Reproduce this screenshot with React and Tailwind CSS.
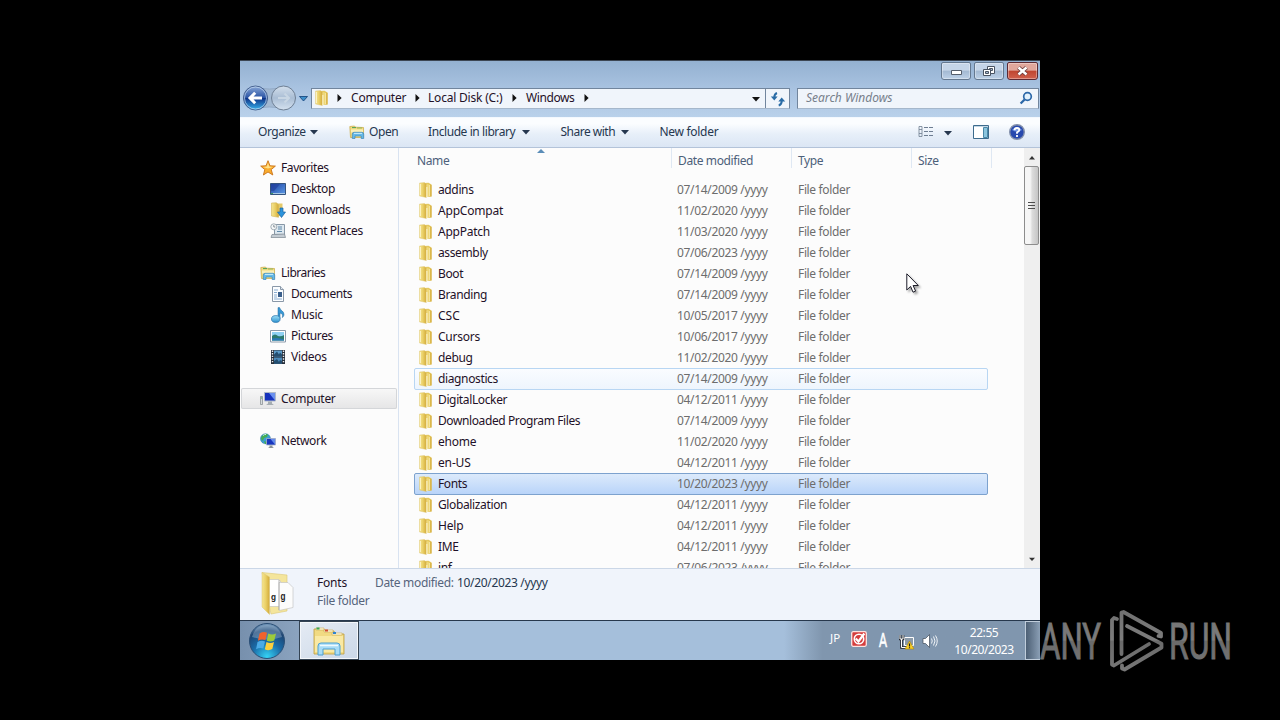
import clsx from 'clsx';

const folders = [
  ['addins', '07/14/2009'],
  ['AppCompat', '11/02/2020', 'tracking-[-0.2px]'],
  ['AppPatch', '11/03/2020', 'tracking-[-0.25px]'],
  ['assembly', '07/06/2023'],
  ['Boot', '07/14/2009'],
  ['Branding', '07/14/2009'],
  ['CSC', '10/05/2017', 'tracking-normal'],
  ['Cursors', '10/06/2017', 'tracking-[-0.25px]'],
  ['debug', '11/02/2020'],
  ['diagnostics', '07/14/2009'],
  ['DigitalLocker', '04/12/2011'],
  ['Downloaded Program Files', '07/14/2009', 'tracking-[-0.4px]'],
  ['ehome', '11/02/2020', 'tracking-[-0.2px]'],
  ['en-US', '04/12/2011', 'tracking-[-0.15px]'],
  ['Fonts', '10/20/2023'],
  ['Globalization', '04/12/2011'],
  ['Help', '04/12/2011', 'tracking-[-0.2px]'],
  ['IME', '04/12/2011', 'tracking-[-0.3px]'],
  ['inf', '07/06/2023'],
];

function Gradients() {
  return (
    <svg className="absolute w-0 h-0" aria-hidden="true">
      <defs>
        <linearGradient id="folder" x1="0" x2="1">
          <stop offset="0" stopColor="#f5e491" />
          <stop offset=".5" stopColor="#ead067" />
          <stop offset="1" stopColor="#d3aa3a" />
        </linearGradient>
        <linearGradient id="screen" x1="0" x2="1" y2="1">
          <stop offset="0" stopColor="#1b3f9e" />
          <stop offset="1" stopColor="#5f9de8" />
        </linearGradient>
        <linearGradient id="cyan" x2="0" y2="1">
          <stop offset="0" stopColor="#9fe0f8" />
          <stop offset="1" stopColor="#2f93cf" />
        </linearGradient>
        <linearGradient id="back" x2="0" y2="1">
          <stop offset="0" stopColor="#8ba9d8" />
          <stop offset=".48" stopColor="#2c55a5" />
          <stop offset=".52" stopColor="#0f3488" />
          <stop offset="1" stopColor="#39b4ee" />
        </linearGradient>
        <linearGradient id="forward" x2="0" y2="1">
          <stop offset="0" stopColor="#d3dfec" />
          <stop offset=".5" stopColor="#a9bdd4" />
          <stop offset="1" stopColor="#d5e2f0" />
        </linearGradient>
        <radialGradient id="orb" cx=".5" cy=".95" r=".95">
          <stop offset="0" stopColor="#35d3f5" />
          <stop offset=".45" stopColor="#1a6ca8" />
          <stop offset=".8" stopColor="#1d4472" />
          <stop offset="1" stopColor="#7ea2c4" />
        </radialGradient>
      </defs>
    </svg>
  );
}

function FolderIcon() {
  return (
    <svg viewBox="0 0 16 16" className="w-4 h-4 shrink-0">
      <path d="M6 1 10.500.8 13.500 2.500v12L7 14.500z" fill="#e4c860" />
      <path d="M8 2.500 10.500 2l3 1v11.500l-5 .3z" fill="url(#folder)" />
      <path d="M1.500 1 6.500.6 8.300 2.500v13L1.500 14z" fill="url(#folder)" stroke="#dcc26c" strokeWidth=".4" />
      <path d="M8.900 5v10" stroke="#fffbe0" strokeWidth=".9" />
      <path d="M2.500 2v11" stroke="#fbf2c3" strokeWidth="1" />
      <path d="M11.300 3v11" stroke="#f8ecb0" strokeWidth="1" />
    </svg>
  );
}

function LibraryIcon() {
  return (
    <svg viewBox="0 0 16 16" className="w-4 h-4 shrink-0">
      <path d="M.8 2.500 5.500 2l1 1.200 8 .3v10H1.500z" fill="#f2dc82" stroke="#c9a945" strokeWidth=".7" />
      <path d="M3 3.600h4" stroke="#48a05a" strokeWidth="1" />
      <path d="M8 4h5" stroke="#7dae54" strokeWidth=".8" />
      <path d="M2 5.500h12v3H2z" fill="#faefb8" />
      <path d="M3.300 14.500V10q0-1.700 1.700-1.700h8q1.700 0 1.700 1.700v4.500h-2.500V12H6v2.500z" fill="#65b9e8" stroke="#3e86bb" strokeWidth=".7" />
      <path d="M5 9.400h8" stroke="#c9edfb" />
    </svg>
  );
}

function StarIcon() {
  return (
    <svg viewBox="0 0 16 16" className="w-4 h-4 shrink-0">
      <path d="m8 .7 2 5.100 5.400.3-4.200 3.500 1.600 5.400L8 12l-4.600 3L4.800 9.600.7 6.100 6 5.800z" fill="#f9ac2e" stroke="#c8731a" strokeWidth=".9" />
      <path d="m8 2.800 1.200 3.800 3.800.3L8 8.500 3 6.900l3.800-.3z" fill="#ffe28a" />
    </svg>
  );
}

function DesktopIcon() {
  return (
    <svg viewBox="0 0 16 16" className="w-4 h-4 shrink-0">
      <path d="M.5 2.500h15v11H.5z" fill="url(#screen)" stroke="#35547f" />
      <path d="M1 3h9L4 10H1z" fill="#2343a0" opacity=".7" />
      <path d="M1 12.500h14" stroke="#a9c8e6" />
      <path d="M1 12.500h2" stroke="#3e9d62" />
    </svg>
  );
}

function DownloadsIcon() {
  return (
    <svg viewBox="0 0 16 16" className="w-4 h-4 shrink-0">
      <path d="M6 1.500h6.500v12L7 14.500z" fill="#e5ca6a" />
      <path d="M1.500 1 6.500.8 8.500 3v12.300L1.500 14z" fill="url(#folder)" stroke="#d2b557" strokeWidth=".6" />
      <path d="M10 6h3v4h2.500L11.500 15.500 7.500 10H10z" fill="#2c94dc" stroke="#1d649f" strokeWidth=".7" />
    </svg>
  );
}

function RecentIcon() {
  return (
    <svg viewBox="0 0 16 16" className="w-4 h-4 shrink-0">
      <path d="M4.500 1.500h10v10h-10z" fill="#dde8f0" stroke="#8797a6" />
      <path d="M8 4h4M8 6h4M7 8.500h5" stroke="#6089a8" />
      <path d="m2 11.500 12.500-.5 1 3.500H1z" fill="#c4ccd3" stroke="#7b8790" strokeWidth=".7" />
      <circle cx="3.800" cy="3.800" r="3" fill="#f5f7f8" stroke="#9aa6ae" strokeWidth=".9" />
      <path d="M3.800 2v2h1.500" stroke="#56656f" strokeWidth=".7" fill="none" />
    </svg>
  );
}

function DocumentIcon() {
  return (
    <svg viewBox="0 0 16 16" className="w-4 h-4 shrink-0">
      <path d="M2.500.5h8l3 3v12h-11z" fill="#fbfdff" stroke="#8a98a8" />
      <path d="M10.500.5v3h3" fill="#dfe7ef" stroke="#8a98a8" />
      <path d="M4 4h4M4 6.500h3M4 9h3M4 11h3M4 13h8" stroke="#7ea4cc" strokeWidth=".9" />
      <path d="M8 6h4v5H8z" fill="#3a5f8c" />
    </svg>
  );
}

function MusicIcon() {
  return (
    <svg viewBox="0 0 16 16" className="w-4 h-4 shrink-0">
      <path d="M8 12V.6h1.600c.6 2.800 4.200 3.400 4.400 6.600.1 1.500-.8 2.700-1.700 3.400.7-2.600.2-3.900-2.300-4.600V12z" fill="#3797d4" stroke="#226a9f" strokeWidth=".5" />
      <ellipse cx="5.800" cy="12" rx="4.300" ry="3.400" fill="url(#cyan)" stroke="#226fa9" strokeWidth=".7" />
    </svg>
  );
}

function PictureIcon() {
  return (
    <svg viewBox="0 0 16 16" className="w-4 h-4 shrink-0">
      <path d="M.5 2.500h15v11.500H.5z" fill="#fff" stroke="#8d9baa" />
      <path d="M2 4h12v8.500H2z" fill="#8fd0f2" />
      <path d="M2 8q3-3 6 0 3 1 6-1v5.500H2z" fill="#2c7a6e" />
      <path d="M2 10.500q6-1.500 12 1v1H2z" fill="#2b78b5" />
    </svg>
  );
}

function VideoIcon() {
  return (
    <svg viewBox="0 0 16 16" className="w-4 h-4 shrink-0">
      <path d="M1 1h14v14H1z" fill="#272f3a" />
      <path d="M4 1.500h8v6H4z" fill="#5d9cc9" />
      <path d="M4 8.500h8v6H4z" fill="#4b8abb" />
      <path d="m4 5.500 3-3 2 3 1-2 2 2v2H4zM4 12l3-2 2 3 1-2 2 1v2.500H4z" fill="#244e70" />
      <path d="M2.500 1.500v13M13.500 1.500v13" stroke="#e9edf1" strokeWidth="1.400" strokeDasharray="1.400 1.200" />
    </svg>
  );
}

function ComputerIcon() {
  return (
    <svg viewBox="0 0 16 16" className="w-4 h-4 shrink-0">
      <path d="M.5 5.500h2v8h-2z" fill="#d7dbdd" stroke="#83898c" strokeWidth=".7" />
      <path d="M1 7h1" stroke="#4aaf4a" />
      <path d="M4.500 1.500h11V10h-11z" fill="#1632bc" stroke="#aeb8c8" />
      <path d="m9 2 6 0v7.500z" fill="#6a90ef" />
      <path d="M8 10.500h4v2l2 1.500H6l2-1.500z" fill="#a6adb2" />
    </svg>
  );
}

function NetworkIcon() {
  return (
    <svg viewBox="0 0 16 16" className="w-4 h-4 shrink-0">
      <circle cx="5.500" cy="5.800" r="5" fill="#3a9fd2" stroke="#276f9b" strokeWidth=".5" />
      <path d="M1.500 3.500Q5 0 8 1.500L7 4 4 5 3 8 1 6zM4 8l3 1v2H5z" fill="#45ad54" />
      <path d="M3 2.500q2-1.500 3-1" stroke="#c5f3df" />
      <path d="M6.500 5.500h9V12h-9z" fill="#1735be" stroke="#a7b3c9" strokeWidth=".8" />
      <path d="m10.500 6 4.500 0v5.500z" fill="#638bec" />
      <path d="M9.500 12.400h3V14l1.500 1H8l1.500-1z" fill="#8c9499" />
    </svg>
  );
}

function Caret({ className = '' }) {
  return (
    <svg viewBox="0 0 8 5" className={clsx('w-2 h-[5px] shrink-0', className)}>
      <path d="M0 0h8L4 4.600z" fill="currentColor" />
    </svg>
  );
}

function RightArrow() {
  return (
    <svg viewBox="0 0 5 8" className="w-[5px] h-2 shrink-0">
      <path d="M.5 0v8L4.600 4z" fill="#111" />
    </svg>
  );
}

function WindowButton({ close, children }) {
  return (
    <div
      className={clsx(
        'h-[18px] rounded-b-[3px] rounded-t-[2px] border shadow-[inset_0_0_0_1px_rgba(255,255,255,0.35)]',
        close
          ? 'w-[31px] border-[#5c2a33] bg-linear-to-b from-[#e0a79c] from-45% via-[#bf4530] via-50% to-[#d0604c]'
          : 'w-[30px] border-[#64788f] bg-linear-to-b from-[#c5d5e8] from-45% via-[#a3b9d2] via-50% to-[#bdd1e7]'
      )}
    >
      <svg viewBox="0 0 31 18" className="w-[31px] h-[18px] -mt-px -ml-px" fill="none">{children}</svg>
    </div>
  );
}

function TitleBar() {
  return (
    <div className="h-[57px] bg-linear-to-b from-[#94b1d1] via-[#a9c3e1] to-[#b9d1ea] border-t border-[#3c4653]">
      <div className="h-[27px] flex justify-end items-start pr-[2px] pt-px gap-[3px]">
        <WindowButton>
          <path d="M10.500 8.500h10v4h-10z" fill="#fff" stroke="#555e6b" />
        </WindowButton>
        <WindowButton>
          <path d="M13.500 4.500h7v7h-7z" fill="#fff" stroke="#4a5462" />
          <path d="M15.500 6.500h3v2h-3z" fill="#a9bcd3" stroke="#4a5462" />
          <path d="M9.500 7.500h7v6h-7z" fill="#fff" stroke="#4a5462" />
          <path d="M11.500 9.500h3v2h-3z" fill="#a9bcd3" stroke="#4a5462" />
        </WindowButton>
        <WindowButton close>
          <path d="m11.500 5.500 8 7m0-7-8 7" stroke="#6b3a3a" strokeWidth="4.200" />
          <path d="m11.500 5.500 8 7m0-7-8 7" stroke="#fff" strokeWidth="2.400" />
        </WindowButton>
      </div>
      <div className="flex items-start">
        <svg viewBox="0 0 72 26" className="w-[72px] h-[26px] -mt-[3px] shrink-0">
          <path d="M15 2q14 4 29 0v22q-15-4-29 0z" fill="#a3b9d2" stroke="#8ba2bd" strokeWidth=".7" />
          <circle cx="15.500" cy="13" r="12" fill="url(#back)" stroke="#46618f" />
          <circle cx="15.500" cy="13" r="11" fill="none" stroke="#c7dcf2" strokeWidth=".7" />
          <path d="M22 13H10m5.200-5.200L10 13l5.200 5.200" fill="none" stroke="#fff" strokeWidth="3" />
          <circle cx="43.500" cy="13" r="12" fill="url(#forward)" stroke="#6e7f94" />
          <path d="M38 13h11m-4.500-4.500L49 13l-4.500 4.500" fill="none" stroke="#c8d6e4" strokeWidth="2" />
          <path d="M59.500 11.500h8l-4 4.500z" fill="#3d8fcb" stroke="#1b4a80" strokeWidth=".9" />
        </svg>
        <div className="w-[479px] h-[21px] ml-[-1px] flex items-center bg-[#f0f5fb] border border-[#71859d] border-b-[#a5b7cb]">
          <div className="w-[454px] h-full flex items-center pl-[2px] pb-px border-r border-[#71859d] text-[#1f1128]">
            <FolderIcon />
            <div className="w-[18px] flex justify-center"><RightArrow /></div>
            <span className="w-[67px] pl-[3px] tracking-[-0.2px] shrink-0">Computer</span>
            <RightArrow />
            <span className="w-[92px] pl-[8px] tracking-[-0.2px] shrink-0 whitespace-nowrap">Local Disk (C:)</span>
            <RightArrow />
            <span className="w-[67px] pl-[9px] tracking-[-0.4px] shrink-0">Windows</span>
            <RightArrow />
            <Caret className="ml-auto mr-[5px] mt-0.5 text-[#111]" />
          </div>
          <svg viewBox="0 0 16 16" className="w-4 h-4 ml-1" fill="none" stroke="#2a6ca6" strokeWidth="2">
            <path d="M7 2Q4.300 3 4.300 6.500" />
            <path d="m.8 5.500 3.500 4 3.300-4z" fill="#2a6ca6" stroke="none" />
            <path d="M8.700 14.500q3-.8 3-4.500" />
            <path d="m8.300 10.500 3.400-4 3.500 4z" fill="#2a6ca6" stroke="none" />
          </svg>
        </div>
        <div className="w-[242px] h-[21px] ml-[7px] pl-2 pr-[5px] pb-px flex items-center justify-between bg-[#f0f5fb] border border-[#71859d] border-b-[#a5b7cb]">
          <span className="italic text-[#77808b] tracking-normal">Search Windows</span>
          <svg viewBox="0 0 14 14" className="w-3.5 h-3.5" fill="none">
            <circle cx="8.500" cy="5.500" r="3.800" fill="#e2f1fc" stroke="#2c68a8" strokeWidth="1.700" />
            <path d="m5.600 8.500-4 4" stroke="#2c68a8" strokeWidth="2.300" />
          </svg>
        </div>
      </div>
    </div>
  );
}

function Toolbar() {
  return (
    <div className="h-[31px] flex items-center pl-[18px] pb-px text-[#26374f] border-t border-[#f3f8fe] border-b border-b-[#b3c3d9] bg-linear-to-b from-[#fbfdff] from-20% via-[#e7eff9] via-55% to-[#dbe6f4]">
      <span className="w-[52px] tracking-[-0.45px]">Organize</span>
      <Caret />
      <div className="w-[79px] flex items-center gap-1 ml-[31px]">
        <LibraryIcon />
        <span className="tracking-[-0.4px]">Open</span>
      </div>
      <span className="w-[94px] tracking-[-0.42px] whitespace-nowrap">Include in library</span>
      <Caret />
      <span className="w-[60px] ml-[30.500px] tracking-[-0.5px]">Share with</span>
      <Caret />
      <span className="ml-[31px] tracking-[-0.3px]">New folder</span>
      <svg viewBox="0 0 16 14" className="w-4 h-3.5 ml-auto" fill="none" stroke="#6e7d91">
        <path d="M1 1.500h3v10H1zM1 4.500h3M1 8.500h3" strokeWidth=".8" />
        <path d="M6 2.500h9M6 6.500h9M6 10.500h9" strokeDasharray="4 1" />
      </svg>
      <Caret className="ml-[10px] mt-0.5" />
      <svg viewBox="0 0 16 14" className="w-4 h-3.5 ml-[21px]">
        <path d="M.5.5h15v13H.5z" fill="#fff" stroke="#3c6b8d" />
        <path d="M1 1.500h14" stroke="#c3d7e6" />
        <path d="M10.500 2.500h4v10h-4z" fill="#8bc5de" stroke="#4a87a7" />
      </svg>
      <svg viewBox="0 0 16 16" className="w-4 h-4 ml-5 mr-[15px]">
        <circle cx="8" cy="8" r="7.300" fill="#2849ae" stroke="#8390ab" strokeWidth="1.400" />
        <path d="M3 6q5-6 10 0-5 3-10 0" fill="#7598e4" />
        <path d="M5.500 6.200Q5.700 4 8 4q2.300 0 2.300 2Q10.300 7.300 8 8.300v1.500M8 11v2" fill="none" stroke="#fff" strokeWidth="1.800" />
      </svg>
    </div>
  );
}

function NavItem({ icon, label, child, active, tracking = 'tracking-[-0.4px]' }) {
  return (
    <div
      className={clsx(
        'h-[21px] flex items-center gap-[5px]',
        child ? 'pl-[29px]' : 'pl-[19px]',
        active && 'rounded-[2px] ring-1 ring-inset ring-[#d4d6d9] bg-linear-to-b from-[#f8f8f8] to-[#e5e5e6]'
      )}
    >
      {icon}
      <span className={tracking}>{label}</span>
    </div>
  );
}

function Sidebar() {
  return (
    <nav className="w-[159px] pt-[9px] pl-px pr-px shrink-0 border-r border-[#d9e3f1] text-[#1f1128] flex flex-col gap-[21px]">
      <div>
        <NavItem icon={<StarIcon />} label="Favorites" />
        <NavItem child icon={<DesktopIcon />} label="Desktop" />
        <NavItem child icon={<DownloadsIcon />} label="Downloads" />
        <NavItem child icon={<RecentIcon />} label="Recent Places" />
      </div>
      <div>
        <NavItem icon={<LibraryIcon />} label="Libraries" tracking="tracking-[-0.5px]" />
        <NavItem child icon={<DocumentIcon />} label="Documents" />
        <NavItem child icon={<MusicIcon />} label="Music" tracking="tracking-[-0.2px]" />
        <NavItem child icon={<PictureIcon />} label="Pictures" />
        <NavItem child icon={<VideoIcon />} label="Videos" tracking="tracking-[-0.3px]" />
      </div>
      <NavItem active icon={<ComputerIcon />} label="Computer" tracking="tracking-[-0.3px]" />
      <NavItem icon={<NetworkIcon />} label="Network" />
    </nav>
  );
}

function HeaderCell({ className, children }) {
  return (
    <div className={clsx('h-5 -mt-[3px] pt-[6px] flex items-center border-r border-[#dfe8f3]', className)}>{children}</div>
  );
}

function FileList() {
  return (
    <div className="flex-1 overflow-hidden">
      <div className="relative flex h-5 pl-[15px] pt-[3px] mb-[11px] items-center text-[#4c607a] tracking-[-0.38px]">
        <svg viewBox="0 0 8 4" className="absolute left-[138px] top-px w-2 h-1">
          <path d="M0 4 4 0l4 4z" fill="#5b8db8" />
        </svg>
        <HeaderCell className="w-[258px] pl-[3px]">Name</HeaderCell>
        <HeaderCell className="w-[120px] pl-[6px]">Date modified</HeaderCell>
        <HeaderCell className="w-[120px] pl-[6px]">Type</HeaderCell>
        <HeaderCell className="w-[80px] pl-[6px]">Size</HeaderCell>
      </div>
      <div className="pl-[15px]">
        {folders.map(([name, date, tracking = 'tracking-[-0.37px]']) => (
          <div
            key={name}
            className={clsx(
              'w-[574px] h-[22px] -mb-px flex items-center pl-[3px] rounded-[2px] border',
              name === 'diagnostics' && 'border-[#b8d6f3] bg-linear-to-b from-[#fafcff] to-[#eef5fd]',
              name === 'Fonts' && 'border-[#7da2ce] bg-linear-to-b from-[#dceafb] to-[#b9d4f9]',
              name !== 'diagnostics' && name !== 'Fonts' && 'border-transparent'
            )}
          >
            <FolderIcon />
            <span className={clsx('w-[243px] pl-1 text-[#1f1128] whitespace-nowrap', tracking)}>{name}</span>
            <span className="w-[121px] text-[#6d6d6d] whitespace-nowrap tracking-[-0.33px]">{date} /yyyy</span>
            <span className="text-[#6d6d6d] tracking-[-0.35px]">File folder</span>
          </div>
        ))}
      </div>
    </div>
  );
}

function Scrollbar() {
  return (
    <div className="w-4 flex flex-col bg-[#efefef]">
      <div className="h-[18px] flex items-center pl-[5px]">
        <Caret className="rotate-180 w-[6px] text-[#333]" />
      </div>
      <div className="w-[15px] h-[79px] flex items-center justify-center rounded-[2px] border border-[#8d8d8d] bg-linear-to-r from-[#f6f6f6] from-40% via-[#dcdcdc] via-55% to-[#c5c5c5]">
        <svg viewBox="0 0 7 8" className="w-[7px] h-2">
          <path d="M0 .5h7M0 3.500h7M0 6.500h7" stroke="#4d4d4d" strokeWidth="1.200" />
        </svg>
      </div>
      <div className="mt-auto h-[18px] flex items-center pl-[5px]">
        <Caret className="w-[6px] text-[#333]" />
      </div>
    </div>
  );
}

function DetailsPane() {
  return (
    <div className="h-[52px] flex items-start bg-[#f0f4fb] border-t border-[#cbd7e7] text-[#56647c]">
      <svg viewBox="0 0 36 44" className="w-9 h-11 ml-[19px] mt-[2px] shrink-0">
        <path d="M3 1.500 28 4v36L12 43z" fill="#f4e59c" stroke="#dcc876" strokeWidth=".6" />
        <path d="M10 8.500h10l3 4v23H10z" fill="#fff" stroke="#bdbdbd" strokeWidth=".6" />
        <path d="M20 11.500h9l5 5v20l-14 3z" fill="#fcfcfc" stroke="#bdbdbd" strokeWidth=".6" />
        <path d="M20 9v30" stroke="#9a9a9a" strokeWidth=".7" />
        <text x="12" y="29" fontFamily="Liberation Sans" fontWeight="700" fontSize="9" textLength="5" lengthAdjust="spacingAndGlyphs" fill="#222">g</text>
        <text x="21.500" y="29" fontFamily="Liberation Sans" fontWeight="700" fontSize="10" textLength="5" lengthAdjust="spacingAndGlyphs" fill="#222">g</text>
        <path d="M3 1.500 10.500 6v37.500L3 36z" fill="url(#folder)" stroke="#dcc876" strokeWidth=".5" />
      </svg>
      <div className="ml-[22px] pt-[5px] leading-[18px] tracking-[-0.33px]">
        <div className="flex">
          <span className="w-[58px] text-[#1f1128] tracking-[-0.2px]">Fonts</span>
          <span className="w-[82px] whitespace-nowrap">Date modified:</span>
          <span className="text-[#26374f]">10/20/2023 /yyyy</span>
        </div>
        <div>File folder</div>
      </div>
    </div>
  );
}

function StartOrb() {
  return (
    <svg viewBox="0 0 38 38" className="w-[38px] h-[38px] shrink-0">
      <circle cx="19" cy="19" r="17.500" fill="url(#orb)" stroke="#2b4f76" />
      <path d="M4 15Q7 3 19 3t15 12q-15 5-30 0" fill="#b8cfe2" opacity=".35" />
      <path d="M11.500 11.500q4-2.500 7.500-.8l-1.600 7.300q-3.500-1.500-7.500.7z" fill="#f0622d" />
      <path d="M20.300 11.500q4 2 7.700-.1l-1.700 7q-3.800 2-7.500.3z" fill="#9ccb3b" />
      <path d="M9.500 20q4-2.300 7.500-.6l-1.700 7.200q-3.300-1.700-7.200.6z" fill="#4cabe6" />
      <path d="M18.500 20q3.800 1.900 7.500-.1l-1.700 7.200q-3.900 2-7.500.2z" fill="#fdd03d" />
    </svg>
  );
}

function ExplorerIcon() {
  return (
    <svg viewBox="0 0 34 32" className="w-[34px] h-8">
      <path d="M2 4h10l1 2h9l1 3h9v20H2z" fill="#f1da82" stroke="#bd9d3e" strokeWidth=".8" />
      <path d="M4 3h8v2H4zM12 5h9v2h-9zM20 8h10v2H20z" fill="#fff9db" stroke="#c9ad59" strokeWidth=".6" />
      <path d="M4.500 3.500h3" stroke="#39a653" strokeWidth="2" />
      <path d="M13 5.500h3" stroke="#d24a2f" strokeWidth="2" />
      <path d="M21 8h3" stroke="#2f84d0" strokeWidth="2" />
      <path d="M3 11h28v16H3z" fill="#f9e9a4" />
      <path d="M6 30V21q0-3 3-3h16q3 0 3 3v9h-5v-6H11v6z" fill="#a7dcf6" stroke="#4d9fd1" />
      <path d="M8 20.500h18" stroke="#effaff" strokeWidth="1.500" />
    </svg>
  );
}

function Taskbar() {
  return (
    <div className="h-10 flex items-center bg-[#a5bfdb] border-t border-[#27384d] text-white">
      <div className="w-[59px] h-full flex items-center pl-2 bg-linear-to-r from-[#7790ad] to-[#8ba3bf]">
        <StartOrb />
      </div>
      <div className="w-[60px] h-full flex items-center justify-center border border-[#344353] bg-linear-to-br from-[#e5ebf4] to-[#cbd8e8] shadow-[inset_0_0_0_1px_#f4f7fb]">
        <ExplorerIcon />
      </div>
      <div className="ml-auto w-[256px] h-full flex items-center bg-linear-to-r from-[#a5bfdb] to-[#8096ae] to-15%">
        <span className="ml-[46px] w-[21px] mb-[5px] text-[11.500px] tracking-normal">JP</span>
        <svg viewBox="0 0 16 16" className="w-4 h-4 mb-[4px]">
          <rect x=".7" y=".7" width="14.600" height="14.600" rx="1.500" fill="#d43d3d" stroke="#ffe3e0" strokeWidth="1.300" />
          <circle cx="8" cy="8" r="4.700" fill="none" stroke="#fff" strokeWidth="1.600" />
          <path d="m4.800 7.500 2.700 3 5.800-8" fill="none" stroke="#fff" strokeWidth="2.200" />
        </svg>
        <svg viewBox="0 0 10 18" className="w-2.5 h-[18px] ml-[11px] mb-[3px]">
          <text x="1" y="16.500" fontFamily="Liberation Sans" fontSize="21" textLength="8" lengthAdjust="spacingAndGlyphs" fill="#fff" stroke="#fff" strokeWidth=".6">A</text>
        </svg>
        <svg viewBox="0 0 16 16" className="w-4 h-4 ml-[11px] mt-0.5" fill="none">
          <path d="M5.500 3.500h9v8h-9z" fill="#8c9ba9" stroke="#fff" />
          <path d="M1 1v4h3V1M2.500 5v8.500H7" stroke="#252a31" strokeWidth="2.600" />
          <path d="M1 1v4h3V1M2.500 5v8.500H7" stroke="#fff" />
          <path d="M10.500 7 6 15h9z" fill="#f8cf26" stroke="#a78211" strokeWidth=".6" />
          <path d="M10.500 9.500v3M10.500 13.200v1" stroke="#222" strokeWidth="1.200" />
        </svg>
        <svg viewBox="0 0 16 16" className="w-4 h-4 ml-[7px]" fill="none">
          <path d="M1 5.500h2.500L7.500 1.500v13L3.500 10.500H1z" fill="#fff" stroke="#3f4a57" strokeWidth=".7" />
          <path d="M9.500 5.500q1.500 2.500 0 5M11.500 3.500q3 4.500 0 9M13.500 2.500q3.500 5.500 0 11" stroke="#eef2f6" />
        </svg>
        <div className="w-[72px] ml-[10px] text-center leading-[17px] tracking-[-0.45px]">
          <div>22:55</div>
          <div>10/20/2023</div>
        </div>
        <div className="w-[15px] h-full ml-auto border-l border-y border-[#c0cddb] bg-linear-to-r from-[#4d6075] to-[#8b9fb5]" />
      </div>
    </div>
  );
}

function Watermark() {
  return (
    <svg viewBox="0 0 194 64" className="absolute left-[1040px] top-[608px] w-[194px] h-16" fill="none">
      <defs>
        <linearGradient id="mark" gradientUnits="userSpaceOnUse" x1="0" y1="2" x2="0" y2="62">
          <stop offset="0" stopColor="#707070" />
          <stop offset=".5" stopColor="#7d7d7d" />
          <stop offset=".52" stopColor="#6a6a6a" />
          <stop offset="1" stopColor="#777777" />
        </linearGradient>
      </defs>
      <g fontFamily="Roboto" fontSize="50.500" fill="url(#mark)" stroke="url(#mark)" strokeWidth="1">
        <text x="0" y="50.500" textLength="61" lengthAdjust="spacingAndGlyphs">ANY</text>
        <text x="129" y="50.500" textLength="63" lengthAdjust="spacingAndGlyphs">RUN</text>
      </g>
      <g stroke="url(#mark)" strokeWidth="3.800" strokeLinejoin="round" strokeLinecap="round">
        <path d="M81.500 46V4.500l2-.5L121 25v3.500l-2.500-.5" />
        <path d="M87 18l34.500 17.800v3.700L84.500 61.500l-2.500-1v-3" />
        <path d="M109 36 74 57.500l-2-1V12l2-2 3 1" />
      </g>
    </svg>
  );
}

function Cursor() {
  return (
    <svg viewBox="0 0 16 22" className="absolute left-[906px] top-[273px] w-4 h-[22px] drop-shadow-[2px_2px_1px_rgba(0,0,0,0.35)]">
      <path d="M.8.800v16.200l3.800-3.600L7 19.200l2.600-1.100-2.500-5.600h5.200z" fill="#fff" stroke="#1c1c28" strokeWidth="1" />
    </svg>
  );
}

export default function App() {
  return (
    <div className="relative w-[1280px] h-[720px] bg-black overflow-hidden pt-[60px] pl-[240px] font-['Noto_Sans','Open_Sans',sans-serif] text-[12px] leading-4">
      <Gradients />
      <div className="w-[800px] h-[600px] flex flex-col overflow-hidden">
        <TitleBar />
        <Toolbar />
        <div className="h-[420px] flex bg-[#fcfcfc]">
          <Sidebar />
          <FileList />
          <Scrollbar />
        </div>
        <DetailsPane />
        <Taskbar />
      </div>
      <Cursor />
      <Watermark />
    </div>
  );
}
